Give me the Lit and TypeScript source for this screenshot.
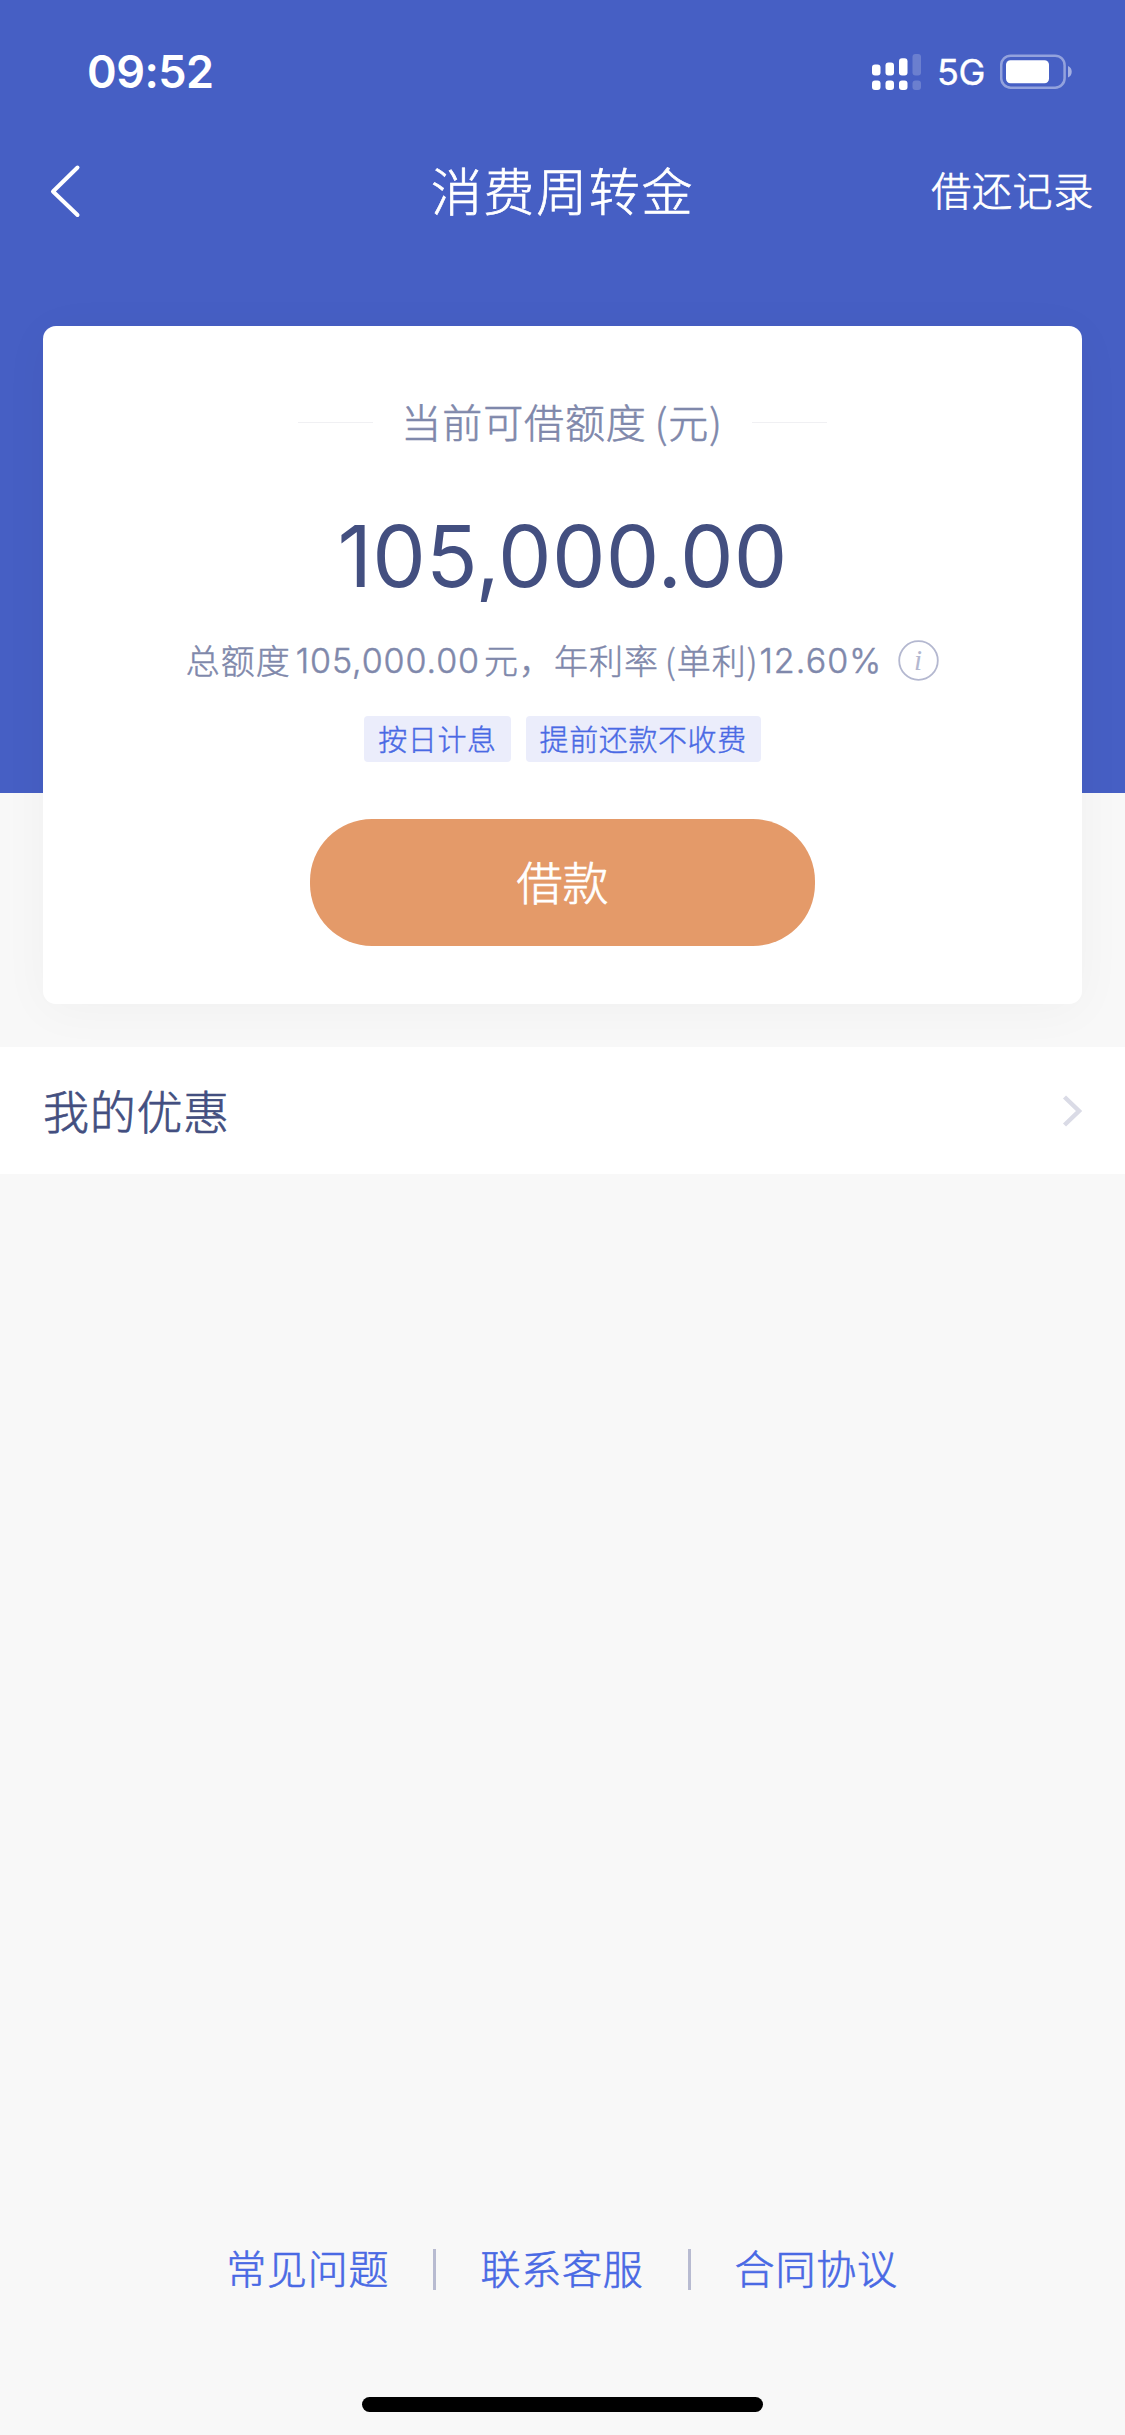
import { LitElement, html, css, svg } from "lit";
import { customElement, property } from "lit/decorators.js";

const fontStack = css`"Inter", "Noto Sans CJK SC", sans-serif`;

@customElement("status-bar")
class StatusBar extends LitElement {
  static styles = css`
    :host {
      display: flex;
      align-items: center;
      justify-content: space-between;
      height: 143px;
      box-sizing: border-box;
      padding: 0 52px 0 87px;
      color: #fff;
      font-family: ${fontStack};
    }
    .time { font-size: 45px; font-weight: 600; line-height: 54px; letter-spacing: -0.5px; }
    .right { display: flex; align-items: center; }
    .signal { display: block; margin-right: 16px; }
    .net { font-size: 36px; font-weight: 400; line-height: 40px; width: 46px; margin-right: 17px; letter-spacing: -0.5px; padding-top: 1px; -webkit-text-stroke: .4px #fff; }
    .battery { display: block; }
  `;

  render() {
    const bars = [64, 62, 57.7, 53.5];
    return html`
      <span class="time">09:52</span>
      <div class="right">
        <svg class="signal" width="49" height="40" viewBox="872 51.500 49 40" fill="#fff">
          ${bars.map(
            (top, i) => svg`<g opacity=${i === 3 ? 0.2 : 1}>
              <rect x=${872 + i * 13.5} y=${top} width="8.5" height=${75 - top} rx="3"></rect>
              <rect x=${872 + i * 13.5} y="80" width="8.5" height="9.5" rx="3"></rect>
            </g>`
          )}
        </svg>
        <span class="net">5G</span>
        <svg class="battery" width="73" height="40" viewBox="1000 51.500 73 40">
          <rect x="1001.2" y="55.2" width="63.4" height="32" rx="9.5" fill="none" stroke="#fff" stroke-opacity=".42" stroke-width="2.5"></rect>
          <rect x="1006" y="59.8" width="43" height="23" rx="4.5" fill="#fff"></rect>
          <path d="M1068 65.5c5 2 5 9.500 0 11.500z" fill="#fff" fill-opacity=".5"></path>
        </svg>
      </div>
    `;
  }
}

@customElement("nav-header")
class NavHeader extends LitElement {
  @property() heading = "";
  @property() action = "";

  static styles = css`
    :host {
      display: grid;
      grid-template-columns: 1fr auto 1fr;
      align-items: center;
      height: 95px;
      padding: 0 32px;
      color: #fff;
      font-family: "Noto Sans CJK SC", sans-serif;
      font-weight: 300;
      -webkit-text-stroke: 0.7px currentColor;
    }
    .back { display: block; margin-left: 18px; }
    .title { font-size: 51px; line-height: 70px; letter-spacing: 1.6px; padding-bottom: 4px; }
    .action { justify-self: end; font-size: 40px; line-height: 60px; letter-spacing: .7px; padding-bottom: 4px; margin-right: -1px; }
  `;

  render() {
    return html`
      <svg class="back" width="32" height="56" viewBox="50 162 32 56" fill="none" stroke="#fff" stroke-width="4" stroke-linecap="round" stroke-linejoin="round">
        <path d="M77.500 166.500L53 190.500L77.500 214"></path>
      </svg>
      <span class="title">${this.heading}</span>
      <span class="action">${this.action}</span>
    `;
  }
}

@customElement("quota-card")
class QuotaCard extends LitElement {
  static styles = css`
    :host {
      display: flex;
      flex-direction: column;
      align-items: center;
      box-sizing: border-box;
      height: 678px;
      margin: 0 43px;
      padding-top: 66px;
      background: #fff;
      border-radius: 13px;
      box-shadow: 0 6px 50px rgba(0, 0, 0, 0.035);
      font-family: "Noto Sans CJK SC", sans-serif;
      font-weight: 300;
      color: #7f88ab;
      -webkit-text-stroke: 0.6px currentColor;
    }
    .label { display: flex; align-items: center; height: 60px; font-size: 40px; letter-spacing: .9px; white-space: nowrap; }
    .rule { width: 75px; height: 1px; background: #f0f0f3; }
    .text { margin: 0 29px 0 28px; padding-bottom: 3px; }
    .paren { margin-left: 8px; }
    .amount { font-family: ${fontStack}; font-weight: 400; font-size: 85px; line-height: 104px; margin-top: 53px; color: #434f80; letter-spacing: .2px; -webkit-text-stroke: 0; }
    .detail { display: flex; align-items: center; height: 50px; margin-top: 26px; font-size: 34px; letter-spacing: 1px; white-space: nowrap; -webkit-text-stroke-width: .5px; }
    .cjk { padding-bottom: 1px; }
    .num { font-family: ${fontStack}; font-weight: 300; letter-spacing: .9px; padding-top: 1px; -webkit-text-stroke-width: .5px; }
    .wide { margin: 0 4px 0 5px; }
    .open { margin-left: 6px; }
    .rate { margin-left: 1px; letter-spacing: 1.100px; }
    .info { display: block; margin-left: 16px; -webkit-text-stroke: 0; }
    .tags { display: flex; gap: 15px; margin-top: 31px; -webkit-text-stroke-width: .4px; }
    .tag { height: 46px; line-height: 45px; padding: 0 14px; font-size: 29px; letter-spacing: .6px; color: #4969e4; background: #ebedfb; border-radius: 4px; }
    .borrow { display: flex; align-items: center; justify-content: center; box-sizing: border-box; width: 505px; height: 127px; margin-top: 57px; padding: 0 0 5px; border: 0; border-radius: 62px; background: #e49a69; color: #fff; font-family: inherit; font-weight: inherit; font-size: 46px; -webkit-text-stroke: .7px #fff; }
    .i { font-family: "Liberation Serif", serif; font-style: italic; font-size: 29px; font-weight: 400; }
  `;

  render() {
    return html`
      <div class="label">
        <i class="rule"></i>
        <span class="text">当前可借额度<span class="paren">(</span>元)</span>
        <i class="rule"></i>
      </div>
      <div class="amount">105,000.00</div>
      <div class="detail">
        <span class="cjk">总额度</span><span class="num wide">105,000.00</span><span class="cjk">元，年利率</span><span class="cjk open">(单利)</span><span class="num rate">12.60%</span>
        <svg class="info" width="41" height="41" viewBox="0 0 41 41">
          <circle cx="20.500" cy="20.500" r="19.300" fill="none" stroke="#b4b8d0" stroke-width="1.800"></circle>
          <text class="i" x="20.500" y="30" text-anchor="middle" fill="#b4b8d0">i</text>
        </svg>
      </div>
      <div class="tags">
        <span class="tag">按日计息</span>
        <span class="tag">提前还款不收费</span>
      </div>
      <button class="borrow">借款</button>
    `;
  }
}

@customElement("app-root")
class AppRoot extends LitElement {
  static styles = css`
    :host {
      display: flex;
      flex-direction: column;
      height: 2435px;
      background: #f8f8f8;
      font-family: "Noto Sans CJK SC", sans-serif;
      font-weight: 300;
      overflow: hidden;
    }
    .top { height: 1047px; background: linear-gradient(#465fc4 793px, #f8f8f8 793px); overflow: hidden; }
    .card { margin-top: 88px; }
    .row { display: flex; align-items: center; justify-content: space-between; height: 127px; padding: 0 43px; background: #fff; color: #434f80; font-size: 46px; letter-spacing: .7px; -webkit-text-stroke: .7px currentColor; }
    .name { padding-bottom: 4px; }
    .links { display: flex; align-items: center; justify-content: center; margin-top: auto; height: 60px; padding-right: 1px; color: #4969e4; font-size: 40px; letter-spacing: .8px; -webkit-text-stroke: .6px currentColor; }
    .link { line-height: 60px; padding-bottom: 4px; }
    .sep { width: 3px; height: 41px; margin: 0 44px; background: #b8bbd1; }
    .home { width: 401px; height: 15px; border-radius: 8px; background: #000; margin: 98px auto 23px; }
  `;

  render() {
    return html`
      <div class="top">
        <status-bar></status-bar>
        <nav-header heading="消费周转金" action="借还记录"></nav-header>
        <quota-card class="card"></quota-card>
      </div>
      <div class="row">
        <span class="name">我的优惠</span>
        <svg width="20" height="34" viewBox="0 0 20 34" fill="none" stroke="#dadbe6" stroke-width="4.400">
          <path d="M2.500 3L17 17L2.500 31"></path>
        </svg>
      </div>
      <div class="links">
        <span class="link">常见问题</span><i class="sep"></i><span class="link">联系客服</span><i class="sep"></i><span class="link">合同协议</span>
      </div>
      <div class="home"></div>
    `;
  }
}
